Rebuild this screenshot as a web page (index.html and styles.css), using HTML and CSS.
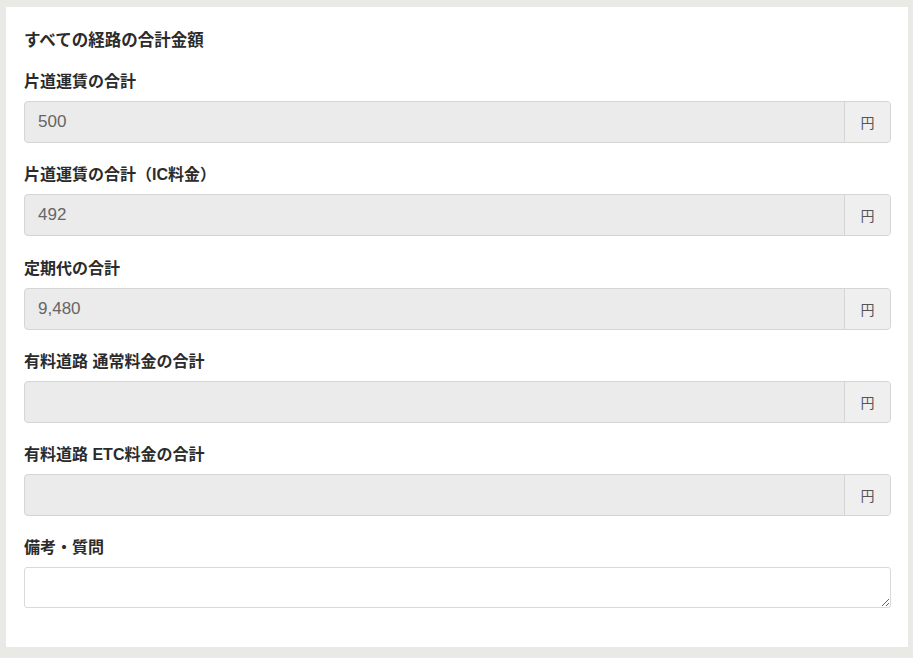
FILE: index.html
```html
<!DOCTYPE html>
<html lang="ja">
<head>
  <meta charset="UTF-8">
  <meta name="viewport" content="width=device-width, initial-scale=1.0">
  <title>すべての経路の合計金額</title>
  <link rel="stylesheet" href="styles.css">
</head>
<body>
  <div class="card">
    <h2 class="title">すべての経路の合計金額</h2>

    <div class="field">
      <label for="oneway">片道運賃の合計</label>
      <div class="input-group">
        <input type="text" id="oneway" value="500" readonly>
        <span class="unit">円</span>
      </div>
    </div>

    <div class="field">
      <label for="oneway-ic">片道運賃の合計（IC料金）</label>
      <div class="input-group">
        <input type="text" id="oneway-ic" value="492" readonly>
        <span class="unit">円</span>
      </div>
    </div>

    <div class="field">
      <label for="pass">定期代の合計</label>
      <div class="input-group">
        <input type="text" id="pass" value="9,480" readonly>
        <span class="unit">円</span>
      </div>
    </div>

    <div class="field">
      <label for="toll">有料道路 通常料金の合計</label>
      <div class="input-group">
        <input type="text" id="toll" value="" readonly>
        <span class="unit">円</span>
      </div>
    </div>

    <div class="field">
      <label for="toll-etc">有料道路 ETC料金の合計</label>
      <div class="input-group">
        <input type="text" id="toll-etc" value="" readonly>
        <span class="unit">円</span>
      </div>
    </div>

    <div class="field last">
      <label for="note">備考・質問</label>
      <textarea id="note" rows="2"></textarea>
    </div>
  </div>
</body>
</html>
```

FILE: styles.css
```css
body {
  margin: 0;
  padding: 7px 5px 11px 6px;
  background-color: #e9e9e6;
  font-family: "Liberation Sans", "Noto Sans CJK JP", sans-serif;
  color: #333;
}

.card {
  background: #fff;
  height: 640px;
  box-sizing: border-box;
  padding: 23px 17px 0 18px;
}

.title {
  margin: 0 0 22px;
  font-size: 16.5px;
  line-height: 20px;
  font-weight: bold;
  color: #2b2b2b;
}

.field {
  margin-bottom: 22.3px;
}

.field.last {
  margin-bottom: 0;
}

label {
  display: block;
  font-size: 16px;
  line-height: 20px;
  font-weight: bold;
  color: #2b2b2b;
  margin-bottom: 9px;
}

.input-group {
  display: flex;
  height: 42px;
  border: 1px solid #d5d5d5;
  border-radius: 4px;
  box-sizing: border-box;
  background: #ebebeb;
  overflow: hidden;
}

.input-group input {
  flex: 1;
  min-width: 0;
  border: none;
  background: transparent;
  padding: 0 13px;
  font-family: "Liberation Sans", "Noto Sans CJK JP", sans-serif;
  font-size: 17px;
  color: #666;
  outline: none;
}

.unit {
  width: 45px;
  display: flex;
  align-items: center;
  justify-content: center;
  border-left: 1px solid #d5d5d5;
  background: #efefef;
  font-family: "Noto Sans CJK JP", sans-serif;
  font-size: 14px;
  color: #555;
}

textarea {
  display: block;
  width: 100%;
  height: 41px;
  box-sizing: border-box;
  border: 1px solid #d9d9d9;
  border-radius: 3px;
  padding: 6px 12px;
  font-family: "Liberation Sans", "Noto Sans CJK JP", sans-serif;
  font-size: 16px;
  resize: vertical;
}
```
